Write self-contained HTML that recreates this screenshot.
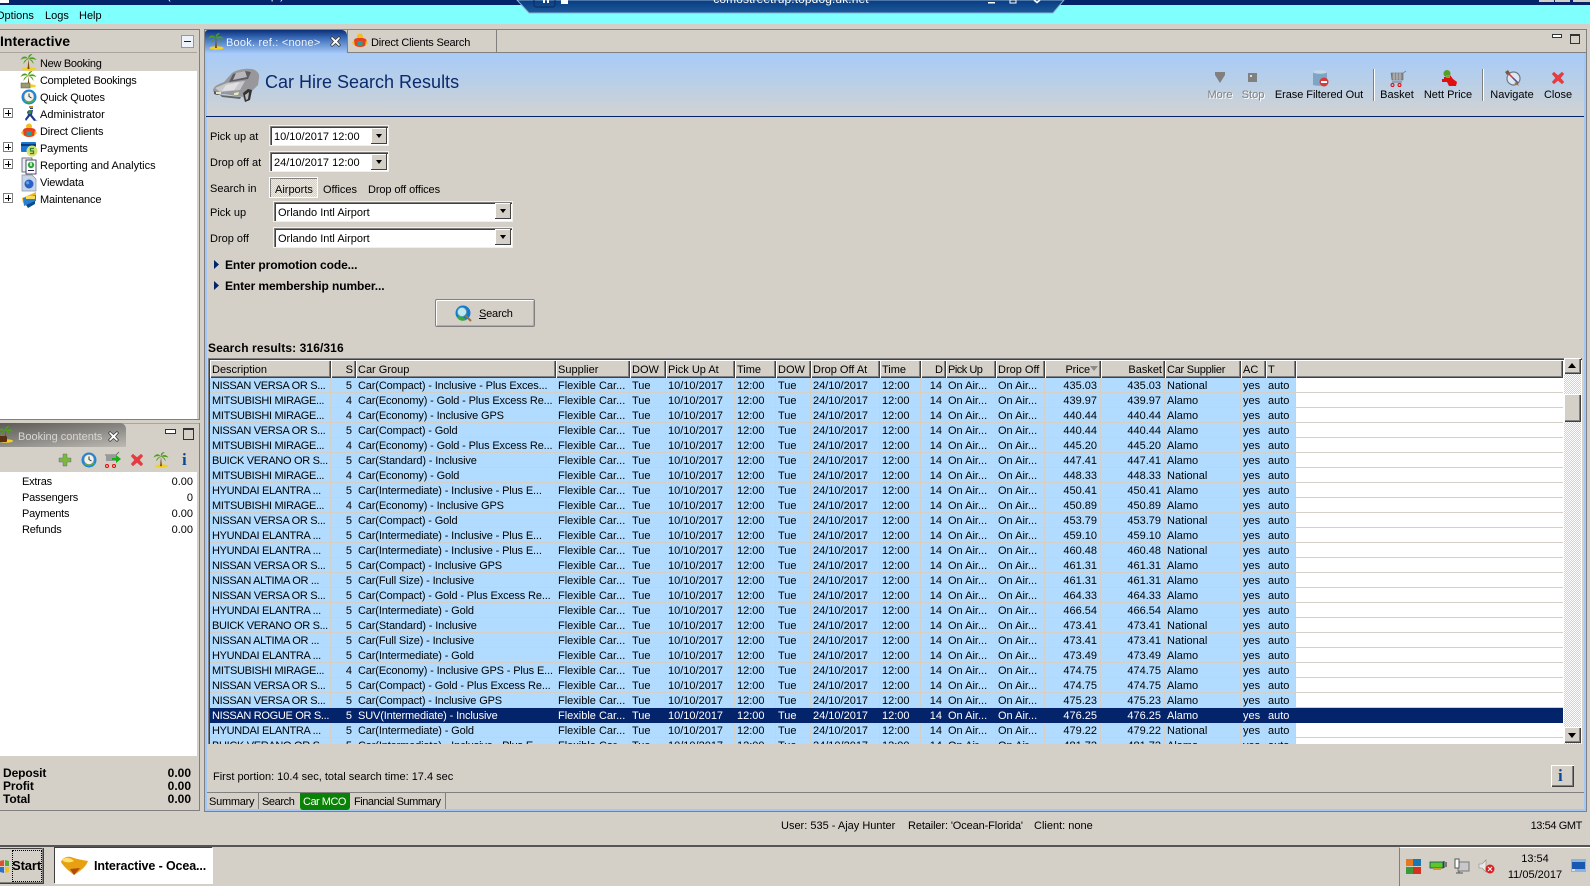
<!DOCTYPE html>
<html><head><meta charset="utf-8"><title>Interactive</title>
<style>
html,body{margin:0;padding:0;width:1590px;height:886px;overflow:hidden;background:#d4d0c8}
body{font:11px/14px "Liberation Sans",Arial,sans-serif;color:#000;position:relative}
.a,.t{position:absolute}
.t{white-space:nowrap;margin-top:1px}
.n{margin-top:0}
.tr{letter-spacing:-.15px}
.c{transform:translateX(-50%)}
.b{font-weight:bold;font-size:12px;margin-top:0}
.r{transform:translateX(-100%)}
svg{position:absolute;overflow:visible}
.fld{position:absolute;background:#fff;box-shadow:inset 1px 1px #808080,inset 2px 2px #404040,0 0 0 1px #f2f0ea}
.dd{position:absolute;background:#d4d0c8;box-shadow:inset -1px -1px #404040,inset 1px 1px #fff;width:16px;height:16px}
.dd:after{content:"";position:absolute;left:5px;top:6px;border:3px solid transparent;border-top:4px solid #000;border-bottom:0}
.pl{position:absolute;left:3px;width:8px;height:8px;border:1px solid #808080;background:#fff}
.pl:before{content:"";position:absolute;left:1px;width:6px;height:1px;top:3.5px;background:#000}
.pl:after{content:"";position:absolute;left:3.5px;top:1px;width:1px;height:6px;background:#000}
#grid{position:absolute;left:208px;top:358px;width:1374px;height:386px;background:#fff;overflow:hidden;box-shadow:inset 1px 1px #808080,inset 2px 2px #404040}
#grid table{position:absolute;left:2px;top:2px;border-collapse:separate;border-spacing:0;table-layout:fixed;width:1353px;font:11px/14px "Liberation Sans",Arial,sans-serif}
th{height:18px;padding:2px 3px 0 2px;box-sizing:border-box;font-weight:normal;text-align:left;background:#d4d0c8;box-shadow:inset 1px 1px #fff,inset -1px -1px #404040,inset -2px -2px #808080;white-space:nowrap;overflow:hidden}
td{height:15px;padding:2px 3px 0 2px;line-height:12px;vertical-align:top;box-sizing:border-box;background:#b2dcff;border-right:1px solid #d4d0c8;border-bottom:1px solid #d4d0c8;white-space:nowrap;overflow:hidden}
td:nth-child(1){letter-spacing:-.32px;padding-right:0}
td:nth-child(3){letter-spacing:-.14px;padding-right:0}
td:nth-child(19){background:#fff;border-right:0}
td:nth-child(2),td:nth-child(11),td:nth-child(14),td:nth-child(15),th:nth-child(2),th:nth-child(11),th:nth-child(14),th:nth-child(15){text-align:right}
tr.s td{background:#03236a;color:#fff;border-color:#03236a}
.sb{position:absolute;left:1564px;top:358px;width:17px;height:386px;background:repeating-conic-gradient(#d4d0c8 0 25%,#fff 0 50%) 0 0/2px 2px}
.btn{position:absolute;background:#d4d0c8;box-shadow:inset 1px 1px #fff,inset -1px -1px #404040,inset -2px -2px #808080}
</style></head><body>
<svg width="0" height="0" style="position:absolute"><defs>
<symbol id="palm" viewBox="0 0 16 17"><ellipse cx="8.5" cy="15" rx="7" ry="1.8" fill="#f4d020"/><path d="M8 5 L9 15 L7 15 Z" fill="#7a4a10"/><path d="M8 5C5 1 2 2 0 6 3 4 5 4 8 5ZM8 5C7 1 10 0 12 0 10 2 9 3 8 5ZM8 5C11 2 14 3 16 6 13 5 11 5 8 5ZM8 5C5 5 3 7 3 10 5 7 6 6 8 5ZM8 5C11 5 13 7 13 10 11 7 10 6 8 5Z" fill="#4f9e1c"/></symbol>
<symbol id="clk" viewBox="0 0 16 16"><circle cx="8" cy="8" r="7.5" fill="#1f86d8"/><path d="M3 12A7.5 7.5 0 0 0 14 11L8 8Z" fill="#4bb43c"/><circle cx="8" cy="7.5" r="5" fill="#f2f2ea" stroke="#888" stroke-width=".6"/><path d="M8 4.5V7.5L10.5 9" fill="none" stroke="#333" stroke-width="1"/></symbol>
<symbol id="x" viewBox="0 0 12 12"><path d="M2 0 6 3.5 10 0 12 2 8.500 6 12 10 10 12 6 8.500 2 12 0 10 3.500 6 0 2Z" fill="#ea3a40" stroke="#c05050" stroke-width=".4"/></symbol>
<symbol id="wx" viewBox="0 0 11 11"><path d="M2 .5 5.500 3.500 9 .5 10.500 2 7.500 5.500 10.500 9 9 10.500 5.500 7.500 2 10.500 .5 9 3.500 5.500 .5 2Z" fill="#fff" stroke="#333" stroke-width=".7"/></symbol>
<symbol id="man" viewBox="0 0 16 16"><circle cx="8" cy="3.500" r="3" fill="#f2bd20"/><path d="M2 8C2 5 5 5 8 5 11 5 14 5 15 8 15 12 13 14 8 14 4 14 1 12 2 8Z" fill="#e8401c"/><rect x="5.500" y="8" width="5" height="5" fill="#20a0a0"/><path d="M0 10 2 7 3 13ZM16 10 14 7 13 13Z" fill="#f2bd20"/></symbol>
</defs></svg>

<!-- top bars -->
<div class="a" style="left:0;top:0;width:1590px;height:5px;background:#03236a"></div>
<div class="a" style="left:0;top:0;width:9px;height:3px;background:#fff"></div>
<div class="a" style="left:0;top:5px;width:1590px;height:19px;background:#80ffff"></div>
<div class="t n" style="left:167px;top:-11px;color:#fff">(  Ocean-Florida Group  )</div>
<div class="a" style="left:1539px;top:0;width:15px;height:2px;background:#d4d0c8"></div>
<div class="a" style="left:1555px;top:0;width:15px;height:2px;background:#d4d0c8"></div>
<div class="a" style="left:1573px;top:0;width:17px;height:2px;background:#d4d0c8"></div>
<svg style="left:0;top:0" width="1590" height="14">
<defs><linearGradient id="tg" x1="0" y1="0" x2="0" y2="1"><stop offset="0" stop-color="#083a82"/><stop offset="1" stop-color="#1d5b9b"/></linearGradient></defs>
<polygon points="517,0 1064,0 1053,13 529,13" fill="url(#tg)" stroke="#8db4cf" stroke-width="1"/>
<rect x="534" y="-3" width="21" height="10" rx="2" fill="none" stroke="#0a2a5e"/><rect x="543" y="0" width="2" height="3" fill="#fff"/><rect x="547" y="0" width="2" height="3" fill="#fff"/><rect x="561" y="0" width="7" height="4" fill="#fff"/>
<rect x="988" y="2" width="7" height="1.500" fill="#fff"/><rect x="1010" y="0" width="6" height="3" fill="none" stroke="#fff"/><path d="M1034 0 1037 2.500 1040 0" stroke="#fff" fill="none" stroke-width="1.500"/></svg>
<div class="t c n" style="left:791px;top:-8px;color:#fff;font-size:12px;letter-spacing:.1px">comostreetrup.topdog.uk.net</div>
<div class="t" style="left:-4px;top:8px">Options</div>
<div class="t" style="left:45px;top:8px">Logs</div>
<div class="t" style="left:79px;top:8px">Help</div>

<!-- left panel upper -->
<div class="a" style="left:0;top:29px;width:200px;height:1px;background:#808080"></div>
<div class="a" style="left:199px;top:29px;width:1px;height:391px;background:#808080"></div>
<div class="a" style="left:0;top:52px;width:197px;height:1px;background:#a8a59e"></div>
<div class="a" style="left:0;top:53px;width:197px;height:366px;background:#fff"></div>
<div class="a" style="left:0;top:419px;width:200px;height:1px;background:#808080"></div>
<div class="a" style="left:0;top:53px;width:197px;height:18px;background:#d4d0c8"></div>
<div class="t n" style="left:0;top:33px;font-weight:bold;font-size:14px;line-height:16px">Interactive</div>
<div class="a" style="left:181px;top:35px;width:11px;height:11px;border:1px solid #7f9db9;background:#eef3fb"></div>
<div class="a" style="left:184px;top:41px;width:7px;height:1px;background:#03236a"></div>
<svg style="left:20px;top:54px" width="17" height="17"><use href="#palm"/></svg>
<svg style="left:20px;top:71px" width="17" height="17"><use href="#palm"/><rect x="1" y="12" width="9" height="5" fill="#9a9a6a" stroke="#555" stroke-width=".5"/></svg>
<svg style="left:21px;top:89px" width="16" height="16"><use href="#clk"/></svg>
<svg style="left:23px;top:106px" width="15" height="16"><path d="M7 0h3v3H7ZM6 4 10 4 9 9 13 14 15 14 11 15 7 10 3 15 2 13 5 9 4 6Z" fill="#1f3a8a"/><path d="M6 0h4v2H6Z" fill="#c98a20"/><path d="M6 4 9 4 8 8 5 8Z" fill="#3a8a3a"/></svg>
<svg style="left:21px;top:123px" width="16" height="16"><use href="#man"/></svg>
<svg style="left:21px;top:141px" width="16" height="16"><rect x="0" y="1" width="15" height="10" rx="1" fill="#1a78d0"/><rect x="0" y="3" width="15" height="2" fill="#0a3a80"/><circle cx="11" cy="10" r="5.500" fill="#d8e070"/><path d="M13 7.500H9.500V10H12.500V12.500H9" fill="none" stroke="#2a8a30" stroke-width="1.300"/></svg>
<svg style="left:22px;top:158px" width="15" height="16"><rect x="0" y="0" width="10" height="14" fill="#e8eef6" stroke="#556" stroke-width=".8"/><rect x="4" y="2" width="10" height="14" fill="#fff" stroke="#224" stroke-width=".8"/><circle cx="9" cy="7" r="3.200" fill="#2aa838"/><rect x="8.300" y="4.500" width="1.400" height="3.500" fill="#fff"/><rect x="6" y="12" width="6" height="1" fill="#224"/></svg>
<svg style="left:22px;top:175px" width="15" height="16"><path d="M0 0H10L14 4V16H0Z" fill="#c8d4e8" stroke="#8892a8" stroke-width=".7"/><circle cx="7" cy="9" r="4.500" fill="#2a60c8"/><path d="M4 7C6 5 8 7 7 9 5 10 4 9 4 7Z" fill="#5aa8e0"/></svg>
<svg style="left:22px;top:192px" width="15" height="16"><path d="M0 6 14 0V5L1 11Z" fill="#f2b820"/><path d="M1 6 14 3 14 9 2 14Z" fill="#2a80d0"/><path d="M4 13 13 9V12L6 16Z" fill="#0a4a90"/><rect x="4" y="4" width="9" height="3" fill="#f8dc60"/></svg>
<div class="pl" style="top:108px"></div><div class="pl" style="top:142px"></div><div class="pl" style="top:159px"></div><div class="pl" style="top:193px"></div>
<div class="t tr" style="left:40px;top:56px;letter-spacing:-.3px">New Booking</div>
<div class="t tr" style="left:40px;top:73px;letter-spacing:-.28px">Completed Bookings</div>
<div class="t tr" style="left:40px;top:90px">Quick Quotes</div>
<div class="t" style="left:40px;top:107px">Administrator</div>
<div class="t tr" style="left:40px;top:124px">Direct Clients</div>
<div class="t tr" style="left:40px;top:141px">Payments</div>
<div class="t" style="left:40px;top:158px">Reporting and Analytics</div>
<div class="t tr" style="left:40px;top:175px">Viewdata</div>
<div class="t tr" style="left:40px;top:192px">Maintenance</div>

<!-- left panel lower -->
<div class="a" style="left:0;top:423px;width:200px;height:1px;background:#a8a59e"></div>
<div class="a" style="left:199px;top:423px;width:1px;height:388px;background:#808080"></div>
<div class="a" style="left:0;top:810px;width:200px;height:1px;background:#808080"></div>
<div class="a" style="left:0;top:423px;width:126px;height:24px;background:linear-gradient(172deg,#5e5b57 0%,#8a8884 50%,#bdbab4 100%);border-radius:0 6px 0 0"></div>
<svg style="left:-3px;top:426px" width="17" height="17"><use href="#palm"/><rect x="1" y="10" width="9" height="6" rx="1" fill="#5a3010"/></svg>
<div class="t" style="left:18px;top:429px;color:#d8d6d0">Booking contents</div>
<svg style="left:108px;top:431px" width="11" height="11"><use href="#wx"/></svg>
<div class="a" style="left:165px;top:429px;width:9px;height:3px;border:1px solid #333;background:#fff"></div>
<div class="a" style="left:183px;top:428px;width:9px;height:9px;border:1px solid #333;border-top-width:2px"></div>
<svg style="left:59px;top:454px" width="12" height="12"><path d="M4 0H8V4H12V8H8V12H4V8H0V4H4Z" fill="#7cb83c" stroke="#558" stroke-width=".4"/></svg>
<svg style="left:81px;top:452px" width="16" height="16"><use href="#clk"/></svg>
<svg style="left:105px;top:452px" width="16" height="16"><path d="M0 3H11L14 0" fill="none" stroke="#777"/><path d="M1 3H11V9H1Z" fill="#999"/><circle cx="2" cy="14" r="1.500" fill="none" stroke="#e00"/><circle cx="9" cy="14" r="1.500" fill="none" stroke="#e00"/><path d="M7 6H11V3L16 7 11 11V8H7Z" fill="#12b012"/></svg>
<svg style="left:131px;top:454px" width="12" height="12"><use href="#x"/></svg>
<svg style="left:153px;top:452px" width="16" height="16"><use href="#palm"/></svg>
<div class="t n" style="left:182px;top:451px;font:bold 17px/18px 'Liberation Serif',serif;color:#0a4a9a">i</div>
<div class="a" style="left:0;top:472px;width:197px;height:284px;background:#fff"></div>
<div class="t" style="left:22px;top:474px;letter-spacing:-.2px">Extras</div><div class="t r" style="left:193px;top:474px">0.00</div>
<div class="t" style="left:22px;top:490px;letter-spacing:-.2px">Passengers</div><div class="t r" style="left:193px;top:490px">0</div>
<div class="t" style="left:22px;top:506px;letter-spacing:-.2px">Payments</div><div class="t r" style="left:193px;top:506px">0.00</div>
<div class="t" style="left:22px;top:522px;letter-spacing:-.2px">Refunds</div><div class="t r" style="left:193px;top:522px">0.00</div>
<div class="t b" style="left:3px;top:766px;letter-spacing:-.1px">Deposit</div><div class="t b r" style="left:191px;top:766px">0.00</div>
<div class="t b" style="left:3px;top:779px;letter-spacing:-.1px">Profit</div><div class="t b r" style="left:191px;top:779px">0.00</div>
<div class="t b" style="left:3px;top:792px;letter-spacing:-.1px">Total</div><div class="t b r" style="left:191px;top:792px">0.00</div>

<!-- right panel -->
<div class="a" style="left:204px;top:29px;width:1383px;height:1px;background:#808080"></div>
<div class="a" style="left:204px;top:52px;width:1383px;height:1px;background:#808080"></div>
<div class="a" style="left:204px;top:30px;width:1px;height:781px;background:#808080"></div>
<div class="a" style="left:1586px;top:30px;width:1px;height:781px;background:#808080"></div>
<div class="a" style="left:205px;top:53px;width:2px;height:757px;background:#a4c8f6"></div>
<div class="a" style="left:1584px;top:53px;width:2px;height:757px;background:#a4c8f6"></div>
<div class="a" style="left:205px;top:809px;width:1381px;height:2px;background:#a4c8f6"></div>
<div class="a" style="left:204px;top:811px;width:1383px;height:1px;background:#808080"></div>
<div class="a" style="left:205px;top:30px;width:142px;height:23px;background:linear-gradient(180deg,#0b2f78 0%,#3a6cb8 35%,#a4c8f6 100%);border-radius:3px 5px 0 0"></div>
<svg style="left:208px;top:33px" width="16" height="17"><use href="#palm"/></svg>
<div class="t n" style="left:226px;top:36px;color:#f0f4fb;letter-spacing:.22px">Book. ref.: &lt;none&gt;</div>
<svg style="left:329.500px;top:36px" width="11" height="11"><use href="#wx"/></svg>
<div class="a" style="left:347px;top:30px;width:1px;height:23px;background:#808080"></div>
<svg style="left:352px;top:33px" width="16" height="16"><use href="#man"/></svg>
<div class="t n" style="left:371px;top:36px;letter-spacing:-.2px">Direct Clients Search</div>
<div class="a" style="left:496px;top:30px;width:1px;height:22px;background:#808080"></div>
<div class="a" style="left:1552px;top:34px;width:8px;height:2px;border:1px solid #333;background:#fff"></div>
<div class="a" style="left:1570px;top:34px;width:8px;height:7px;border:1px solid #333;border-top-width:2px"></div>
<div class="a" style="left:207px;top:53px;width:1377px;height:63px;background:linear-gradient(180deg,#a8cbf8 0%,#b8cfe8 45%,#d2d2d2 100%)"></div>
<div class="a" style="left:206px;top:116px;width:1378px;height:1px;background:#03236a"></div>
<svg style="left:212px;top:67px" width="48" height="36" viewBox="0 0 48 36">
<path d="M1 24C1 20 4 18 12 15L20 6C24 3 32 1 40 2 45 3 48 7 47 11L46 18 40 24 38 32 33 35 31 30 12 27 5 28Z" fill="#98989c"/>
<path d="M21 7 33 4 39 5 36 12 17 15Z" fill="#5c5c60"/><path d="M24 6 33 4 35 10 21 13Z" fill="#b8b8bc"/>
<path d="M3 21 15 16 33 14 28 23 8 25Z" fill="#c8c8cc"/><path d="M14 18 28 15 22 23 10 24Z" fill="#e0e0e2"/>
<path d="M2 24 9 27 5 28 2 27Z" fill="#55555a"/><path d="M4 25H9V27H4ZM22 26 27 25 26 28 22 28Z" fill="#e8e8c0"/>
<path d="M31 26 36 22 40 23 38 33 33 35Z" fill="#333"/><path d="M33 28 37 25 36 32 34 33Z" fill="#bbb"/><path d="M8 28 29 30 28 32 10 30Z" fill="#666"/></svg>
<div class="t n" style="left:265px;top:71px;font-size:18px;line-height:22px;color:#0a2a6e">Car Hire Search Results</div>

<!-- toolbar -->
<svg style="left:1215px;top:72px" width="10" height="11"><path d="M0 0H10V3L5 11 0 3Z" fill="#808080"/></svg>
<svg style="left:1248px;top:73px" width="9" height="9"><rect width="9" height="9" fill="#808080"/><rect x="2" y="2" width="2" height="2" fill="#ddd"/></svg>
<svg style="left:1313px;top:70px" width="16" height="17"><path d="M0 2C4 0 10 0 14 2V15C10 16 4 16 0 15Z" fill="#7ea5c4"/><ellipse cx="7" cy="2" rx="7" ry="1.800" fill="#c4d8e8"/><circle cx="11" cy="12" r="4.500" fill="#d83a3a"/><rect x="8" y="11" width="6" height="2" fill="#fff"/></svg>
<svg style="left:1390px;top:70px" width="16" height="17"><path d="M1 3H13V10H2ZM13 3 16 1" fill="#8a8a8a" stroke="#666" stroke-width=".6"/><path d="M4 3V10M7 3V10M10 3V10" stroke="#ddd" stroke-width=".7"/><path d="M2 12H12" stroke="#777"/><circle cx="2.500" cy="15" r="1.500" fill="none" stroke="#e00"/><circle cx="9.500" cy="15" r="1.500" fill="none" stroke="#e00"/></svg>
<svg style="left:1441px;top:70px" width="16" height="16"><circle cx="6" cy="3.500" r="3.500" fill="#5a9e28"/><path d="M3 7H8L9 5 12 9 16 12 15 16H8L6 12H1L1 9H3Z" fill="#e01010"/><rect x="5" y="5" width="4" height="3" fill="#6ab430"/></svg>
<svg style="left:1505px;top:70px" width="16" height="16"><circle cx="8.500" cy="8.500" r="6.500" fill="#dfe8f0" stroke="#6a7a88" stroke-width="1.200"/><path d="M4 4 13 13" stroke="#d83030" stroke-width="1.500"/><path d="M8 8 13 13" stroke="#2a60c8" stroke-width="1.500"/><path d="M0 2 3 0 5 3 2 5Z" fill="#7a5a3a"/><path d="M9 13 14 16 12 12Z" fill="#a06a30"/></svg>
<svg style="left:1552px;top:72px" width="12" height="12"><use href="#x"/></svg>
<div class="a" style="left:1373px;top:69px;width:1px;height:32px;background:#808080;box-shadow:1px 0 #fff"></div>
<div class="a" style="left:1482px;top:69px;width:1px;height:32px;background:#808080;box-shadow:1px 0 #fff"></div>
<div class="t c" style="left:1220px;top:87px;color:#808080;text-shadow:1px 1px #fff">More</div>
<div class="t c" style="left:1253px;top:87px;color:#808080;text-shadow:1px 1px #fff">Stop</div>
<div class="t c" style="left:1319px;top:87px;letter-spacing:-.05px">Erase Filtered Out</div>
<div class="t c" style="left:1397px;top:87px">Basket</div>
<div class="t c" style="left:1448px;top:87px">Nett Price</div>
<div class="t c" style="left:1512px;top:87px">Navigate</div>
<div class="t c" style="left:1558px;top:87px">Close</div>

<!-- form -->
<div class="t" style="left:210px;top:129px">Pick up at</div>
<div class="fld" style="left:270px;top:126px;width:118px;height:19px"></div>
<div class="t" style="left:274px;top:129px">10/10/2017 12:00</div><div class="dd" style="left:371px;top:128px"></div>
<div class="t" style="left:210px;top:155px">Drop off at</div>
<div class="fld" style="left:270px;top:152px;width:118px;height:19px"></div>
<div class="t" style="left:274px;top:155px">24/10/2017 12:00</div><div class="dd" style="left:371px;top:154px"></div>
<div class="t" style="left:210px;top:181px">Search in</div>
<div class="a" style="left:270px;top:178px;width:47px;height:19px;box-shadow:inset 1px 1px #808080,0 0 0 1px #fff;background:repeating-conic-gradient(#d4d0c8 0 25%,#eeeae2 0 50%) 0 0/2px 2px"></div>
<div class="t" style="left:275px;top:182px">Airports</div>
<div class="t" style="left:323px;top:182px">Offices</div>
<div class="t" style="left:368px;top:182px;letter-spacing:-.1px">Drop off offices</div>
<div class="t" style="left:210px;top:205px">Pick up</div>
<div class="fld" style="left:274px;top:202px;width:238px;height:19px"></div>
<div class="t" style="left:278px;top:205px">Orlando Intl Airport</div><div class="dd" style="left:495px;top:203px"></div>
<div class="t" style="left:210px;top:231px">Drop off</div>
<div class="fld" style="left:274px;top:228px;width:238px;height:19px"></div>
<div class="t" style="left:278px;top:231px">Orlando Intl Airport</div><div class="dd" style="left:495px;top:229px"></div>
<svg style="left:214px;top:260px" width="5" height="9"><path d="M0 0 5 4.500 0 9Z" fill="#03236a"/></svg>
<div class="t b" style="left:225px;top:258px;letter-spacing:-.1px">Enter promotion code...</div>
<svg style="left:214px;top:281px" width="5" height="9"><path d="M0 0 5 4.500 0 9Z" fill="#03236a"/></svg>
<div class="t b" style="left:225px;top:279px;letter-spacing:-.1px">Enter membership number...</div>
<div class="a" style="left:435px;top:299px;width:100px;height:28px;background:#d4d0c8;border:1px solid #808080;box-sizing:border-box;border-radius:2px;box-shadow:inset 1px 1px #fff,inset -1px -1px #b0aca4"></div>
<svg style="left:455px;top:305px" width="17" height="17"><circle cx="8" cy="8" r="7.500" fill="#1878d0"/><path d="M2 12C5 10 9 12 11 15 7 17 3 15 2 12Z" fill="#3aa83a"/><circle cx="7" cy="7" r="4.500" fill="#bfe8f0" stroke="#6aa" stroke-width=".8"/><path d="M10 10 16 16" stroke="#a07030" stroke-width="2"/></svg>
<div class="t" style="left:479px;top:306px;letter-spacing:-.2px"><u>S</u>earch</div>
<div class="t b" style="left:208px;top:341px;letter-spacing:.1px">Search results: 316/316</div>

<!-- grid -->
<div id="grid"><table>
<colgroup><col style="width:121px"><col style="width:25px"><col style="width:200px"><col style="width:74px"><col style="width:36px"><col style="width:69px"><col style="width:41px"><col style="width:35px"><col style="width:69px"><col style="width:41px"><col style="width:25px"><col style="width:50px"><col style="width:49px"><col style="width:56px"><col style="width:64px"><col style="width:76px"><col style="width:25px"><col style="width:30px"><col style="width:267px"></colgroup>
<tr><th>Description<th>S<th>Car Group<th>Supplier<th>DOW<th>Pick Up At<th>Time<th>DOW<th>Drop Off At<th>Time<th>D<th style="letter-spacing:-.5px">Pick Up<th>Drop Off<th style="padding-right:11px;position:relative;letter-spacing:-.1px">Price<span style="position:absolute;right:3px;top:6px;border:4px solid transparent;border-top:5px solid #8a8a8a;border-bottom:0"></span><th>Basket<th style="letter-spacing:-.25px">Car Supplier<th>AC<th>T<th></tr>
<tr><td>NISSAN VERSA OR S...<td>5<td>Car(Compact) - Inclusive - Plus Exces...<td>Flexible Car...<td>Tue<td>10/10/2017<td>12:00<td>Tue<td>24/10/2017<td>12:00<td>14<td>On Air...<td>On Air...<td>435.03<td>435.03<td>National<td>yes<td>auto<td></tr>
<tr><td>MITSUBISHI MIRAGE...<td>4<td>Car(Economy) - Gold - Plus Excess Re...<td>Flexible Car...<td>Tue<td>10/10/2017<td>12:00<td>Tue<td>24/10/2017<td>12:00<td>14<td>On Air...<td>On Air...<td>439.97<td>439.97<td>Alamo<td>yes<td>auto<td></tr>
<tr><td>MITSUBISHI MIRAGE...<td>4<td>Car(Economy) - Inclusive GPS<td>Flexible Car...<td>Tue<td>10/10/2017<td>12:00<td>Tue<td>24/10/2017<td>12:00<td>14<td>On Air...<td>On Air...<td>440.44<td>440.44<td>Alamo<td>yes<td>auto<td></tr>
<tr><td>NISSAN VERSA OR S...<td>5<td>Car(Compact) - Gold<td>Flexible Car...<td>Tue<td>10/10/2017<td>12:00<td>Tue<td>24/10/2017<td>12:00<td>14<td>On Air...<td>On Air...<td>440.44<td>440.44<td>Alamo<td>yes<td>auto<td></tr>
<tr><td>MITSUBISHI MIRAGE...<td>4<td>Car(Economy) - Gold - Plus Excess Re...<td>Flexible Car...<td>Tue<td>10/10/2017<td>12:00<td>Tue<td>24/10/2017<td>12:00<td>14<td>On Air...<td>On Air...<td>445.20<td>445.20<td>Alamo<td>yes<td>auto<td></tr>
<tr><td>BUICK VERANO OR S...<td>5<td>Car(Standard) - Inclusive<td>Flexible Car...<td>Tue<td>10/10/2017<td>12:00<td>Tue<td>24/10/2017<td>12:00<td>14<td>On Air...<td>On Air...<td>447.41<td>447.41<td>Alamo<td>yes<td>auto<td></tr>
<tr><td>MITSUBISHI MIRAGE...<td>4<td>Car(Economy) - Gold<td>Flexible Car...<td>Tue<td>10/10/2017<td>12:00<td>Tue<td>24/10/2017<td>12:00<td>14<td>On Air...<td>On Air...<td>448.33<td>448.33<td>National<td>yes<td>auto<td></tr>
<tr><td>HYUNDAI ELANTRA ...<td>5<td>Car(Intermediate) - Inclusive - Plus E...<td>Flexible Car...<td>Tue<td>10/10/2017<td>12:00<td>Tue<td>24/10/2017<td>12:00<td>14<td>On Air...<td>On Air...<td>450.41<td>450.41<td>Alamo<td>yes<td>auto<td></tr>
<tr><td>MITSUBISHI MIRAGE...<td>4<td>Car(Economy) - Inclusive GPS<td>Flexible Car...<td>Tue<td>10/10/2017<td>12:00<td>Tue<td>24/10/2017<td>12:00<td>14<td>On Air...<td>On Air...<td>450.89<td>450.89<td>Alamo<td>yes<td>auto<td></tr>
<tr><td>NISSAN VERSA OR S...<td>5<td>Car(Compact) - Gold<td>Flexible Car...<td>Tue<td>10/10/2017<td>12:00<td>Tue<td>24/10/2017<td>12:00<td>14<td>On Air...<td>On Air...<td>453.79<td>453.79<td>National<td>yes<td>auto<td></tr>
<tr><td>HYUNDAI ELANTRA ...<td>5<td>Car(Intermediate) - Inclusive - Plus E...<td>Flexible Car...<td>Tue<td>10/10/2017<td>12:00<td>Tue<td>24/10/2017<td>12:00<td>14<td>On Air...<td>On Air...<td>459.10<td>459.10<td>Alamo<td>yes<td>auto<td></tr>
<tr><td>HYUNDAI ELANTRA ...<td>5<td>Car(Intermediate) - Inclusive - Plus E...<td>Flexible Car...<td>Tue<td>10/10/2017<td>12:00<td>Tue<td>24/10/2017<td>12:00<td>14<td>On Air...<td>On Air...<td>460.48<td>460.48<td>National<td>yes<td>auto<td></tr>
<tr><td>NISSAN VERSA OR S...<td>5<td>Car(Compact) - Inclusive GPS<td>Flexible Car...<td>Tue<td>10/10/2017<td>12:00<td>Tue<td>24/10/2017<td>12:00<td>14<td>On Air...<td>On Air...<td>461.31<td>461.31<td>Alamo<td>yes<td>auto<td></tr>
<tr><td>NISSAN ALTIMA OR ...<td>5<td>Car(Full Size) - Inclusive<td>Flexible Car...<td>Tue<td>10/10/2017<td>12:00<td>Tue<td>24/10/2017<td>12:00<td>14<td>On Air...<td>On Air...<td>461.31<td>461.31<td>Alamo<td>yes<td>auto<td></tr>
<tr><td>NISSAN VERSA OR S...<td>5<td>Car(Compact) - Gold - Plus Excess Re...<td>Flexible Car...<td>Tue<td>10/10/2017<td>12:00<td>Tue<td>24/10/2017<td>12:00<td>14<td>On Air...<td>On Air...<td>464.33<td>464.33<td>Alamo<td>yes<td>auto<td></tr>
<tr><td>HYUNDAI ELANTRA ...<td>5<td>Car(Intermediate) - Gold<td>Flexible Car...<td>Tue<td>10/10/2017<td>12:00<td>Tue<td>24/10/2017<td>12:00<td>14<td>On Air...<td>On Air...<td>466.54<td>466.54<td>Alamo<td>yes<td>auto<td></tr>
<tr><td>BUICK VERANO OR S...<td>5<td>Car(Standard) - Inclusive<td>Flexible Car...<td>Tue<td>10/10/2017<td>12:00<td>Tue<td>24/10/2017<td>12:00<td>14<td>On Air...<td>On Air...<td>473.41<td>473.41<td>National<td>yes<td>auto<td></tr>
<tr><td>NISSAN ALTIMA OR ...<td>5<td>Car(Full Size) - Inclusive<td>Flexible Car...<td>Tue<td>10/10/2017<td>12:00<td>Tue<td>24/10/2017<td>12:00<td>14<td>On Air...<td>On Air...<td>473.41<td>473.41<td>National<td>yes<td>auto<td></tr>
<tr><td>HYUNDAI ELANTRA ...<td>5<td>Car(Intermediate) - Gold<td>Flexible Car...<td>Tue<td>10/10/2017<td>12:00<td>Tue<td>24/10/2017<td>12:00<td>14<td>On Air...<td>On Air...<td>473.49<td>473.49<td>Alamo<td>yes<td>auto<td></tr>
<tr><td>MITSUBISHI MIRAGE...<td>4<td>Car(Economy) - Inclusive GPS - Plus E...<td>Flexible Car...<td>Tue<td>10/10/2017<td>12:00<td>Tue<td>24/10/2017<td>12:00<td>14<td>On Air...<td>On Air...<td>474.75<td>474.75<td>Alamo<td>yes<td>auto<td></tr>
<tr><td>NISSAN VERSA OR S...<td>5<td>Car(Compact) - Gold - Plus Excess Re...<td>Flexible Car...<td>Tue<td>10/10/2017<td>12:00<td>Tue<td>24/10/2017<td>12:00<td>14<td>On Air...<td>On Air...<td>474.75<td>474.75<td>Alamo<td>yes<td>auto<td></tr>
<tr><td>NISSAN VERSA OR S...<td>5<td>Car(Compact) - Inclusive GPS<td>Flexible Car...<td>Tue<td>10/10/2017<td>12:00<td>Tue<td>24/10/2017<td>12:00<td>14<td>On Air...<td>On Air...<td>475.23<td>475.23<td>Alamo<td>yes<td>auto<td></tr>
<tr class="s"><td>NISSAN ROGUE OR S...<td>5<td>SUV(Intermediate) - Inclusive<td>Flexible Car...<td>Tue<td>10/10/2017<td>12:00<td>Tue<td>24/10/2017<td>12:00<td>14<td>On Air...<td>On Air...<td>476.25<td>476.25<td>Alamo<td>yes<td>auto<td style="background:#03236a"></tr>
<tr><td>HYUNDAI ELANTRA ...<td>5<td>Car(Intermediate) - Gold<td>Flexible Car...<td>Tue<td>10/10/2017<td>12:00<td>Tue<td>24/10/2017<td>12:00<td>14<td>On Air...<td>On Air...<td>479.22<td>479.22<td>National<td>yes<td>auto<td></tr>
<tr><td>BUICK VERANO OR S...<td>5<td>Car(Intermediate) - Inclusive - Plus E...<td>Flexible Car...<td>Tue<td>10/10/2017<td>12:00<td>Tue<td>24/10/2017<td>12:00<td>14<td>On Air...<td>On Air...<td>481.72<td>481.72<td>Alamo<td>yes<td>auto<td></tr>
</table></div>
<div class="sb"></div>
<div class="btn" style="left:1564px;top:358px;width:17px;height:16px"></div>
<div class="a" style="left:1568px;top:363px;border:4.500px solid transparent;border-bottom:5px solid #000;border-top:0"></div>
<div class="btn" style="left:1564px;top:394px;width:17px;height:28px"></div>
<div class="btn" style="left:1564px;top:727px;width:17px;height:16px"></div>
<div class="a" style="left:1568px;top:733px;border:4.500px solid transparent;border-top:5px solid #000;border-bottom:0"></div>

<div class="t" style="left:213px;top:769px">First portion: 10.4 sec, total search time: 17.4 sec</div>
<div class="btn" style="left:1551px;top:765px;width:23px;height:22px"></div>
<div class="t n" style="left:1558px;top:767px;font:bold 17px/18px 'Liberation Serif',serif;color:#0a4a9a">i</div>
<div class="a" style="left:207px;top:792px;width:1377px;height:1px;background:#808080"></div>
<div class="t" style="left:209px;top:794px;letter-spacing:-.25px">Summary</div>
<div class="a" style="left:258px;top:793px;width:1px;height:16px;background:#808080"></div>
<div class="t" style="left:262px;top:794px;letter-spacing:-.4px">Search</div>
<div class="a" style="left:300px;top:793px;width:50px;height:17px;background:#0a8205;border-radius:0 0 3px 3px"></div>
<div class="t" style="left:303px;top:794px;color:#fff;letter-spacing:-.5px">Car MCO</div>
<div class="t" style="left:354px;top:794px;letter-spacing:-.45px">Financial Summary</div>
<div class="a" style="left:445px;top:793px;width:1px;height:16px;background:#808080"></div>

<!-- status -->
<div class="t" style="left:781px;top:818px">User: 535 - Ajay Hunter</div>
<div class="t" style="left:908px;top:818px;letter-spacing:-.12px">Retailer: 'Ocean-Florida'</div>
<div class="t" style="left:1034px;top:818px">Client: none</div>
<div class="t r" style="left:1582px;top:818px;letter-spacing:-.4px">13:54 GMT</div>

<!-- taskbar -->
<div class="a" style="left:0;top:845px;width:1590px;height:2px;background:#555"></div>
<div class="a" style="left:0;top:848px;width:44px;height:36px;box-shadow:inset -1px -1px #404040,inset -2px -2px #808080,inset 0 1px #404040,inset -1px 1px #404040"></div>
<svg style="left:0;top:860px" width="10" height="14"><path d="M0 1 4 0V6H0Z" fill="#e0502a"/><path d="M5 0 9 1V6H5Z" fill="#5aa838"/><path d="M0 7H4V13L0 12Z" fill="#2a70d0"/><path d="M5 7H9V12L5 13Z" fill="#f0c020"/></svg>
<div class="a" style="left:12px;top:850px;width:30px;height:32px;border:1px dotted #000;box-sizing:border-box"></div>
<div class="t n" style="left:12px;top:859px;font-weight:bold;font-size:13px;letter-spacing:-.1px">Start</div>
<div class="a" style="left:55px;top:848px;width:158px;height:36px;background:#fff;box-shadow:-1px -1px #404040,1px 1px #d4d0c8"></div>
<svg style="left:60px;top:856px" width="28" height="20"><path d="M1 6C2 2 7 0 11 1 16 3 22 4 28 5 26 11 20 15 14 19 9 15 4 11 1 6Z" fill="#e8a010"/><path d="M2 4C5 1 10 1 14 5 10 7 5 7 2 4Z" fill="#ffe070"/><path d="M10 13 20 12 14 19Z" fill="#b04a10"/></svg>
<div class="t n" style="left:94px;top:859px;font-weight:bold;font-size:12.500px;letter-spacing:-.12px">Interactive - Ocea...</div>
<div class="a" style="left:1399px;top:847px;width:191px;height:39px;border-left:1px solid #808080;border-top:1px solid #fff;box-sizing:border-box"></div>
<svg style="left:1406px;top:859px" width="15" height="15"><rect width="7" height="7" fill="#e87820"/><rect x="7" width="8" height="7" fill="#1878b0"/><rect y="8" width="7" height="7" fill="#3a9a3a"/><rect x="7" y="8" width="8" height="7" fill="#d83020"/></svg>
<svg style="left:1430px;top:861px" width="16" height="10"><rect y="1" width="13" height="6" fill="#5ac828" stroke="#146" stroke-width=".8"/><rect x="3" y="7" width="8" height="2" fill="#c8a020"/><path d="M14 0V7M16 1V6" stroke="#222"/></svg>
<svg style="left:1454px;top:859px" width="16" height="15"><rect x="4" y="3" width="11" height="9" fill="#c8c8c8" stroke="#777"/><path d="M2 14H9M5 12V14" stroke="#555"/><rect x="1" y="0" width="4" height="9" fill="#fff" stroke="#555"/></svg>
<svg style="left:1479px;top:859px" width="16" height="15"><path d="M0 5H3L7 1V13L3 9H0Z" fill="#e8e8e8" stroke="#888" stroke-width=".6"/><circle cx="11" cy="10" r="4.500" fill="#d82020"/><path d="M9 8 13 12M13 8 9 12" stroke="#fff"/></svg>
<div class="t c" style="left:1535px;top:851px">13:54</div>
<div class="t c" style="left:1535px;top:867px">11/05/2017</div>
<svg style="left:1571px;top:859px" width="15" height="13"><rect width="15" height="13" fill="#8ab4dc"/><rect x="1" y="3" width="13" height="7" fill="#1858b0"/><rect x="1" y="10" width="3" height="2" fill="#e0e0e0"/></svg>
</body></html>
